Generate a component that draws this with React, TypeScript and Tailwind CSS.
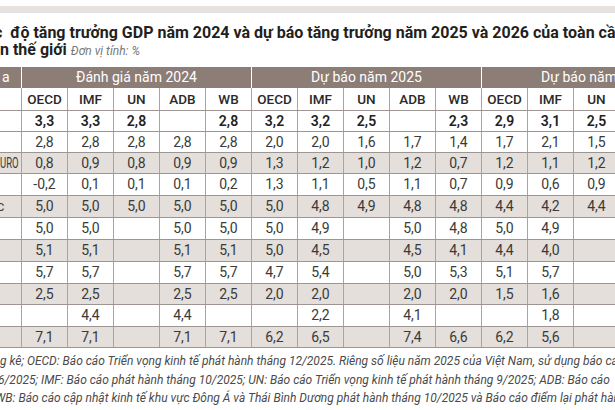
const groups = ['Đánh giá năm 2024', 'Dự báo năm 2025', 'Dự báo năm 2026'];
const orgs = ['OECD', 'IMF', 'UN', 'ADB', 'WB'];

type Row = {
  label: string;
  labelCls?: string;
  bold?: boolean;
  shaded?: boolean;
  h: string;
  v: string[];
};

const rows: Row[] = [
  { label: '', bold: true, h: 'h-[21px]', v: ['3,3', '3,3', '2,8', '', '2,8', '3,2', '3,2', '2,5', '', '2,3', '2,9', '3,1', '2,5', '', ''] },
  { label: '', h: 'h-[21px]', v: ['2,8', '2,8', '2,8', '2,8', '2,8', '2,0', '2,0', '1,6', '1,7', '1,4', '1,7', '2,1', '1,5', '', ''] },
  { label: 'URO', labelCls: 'inline-block origin-left scale-x-[0.68] text-[14px]', shaded: true, h: 'h-[21px]', v: ['0,8', '0,9', '0,8', '0,9', '0,9', '1,3', '1,2', '1,0', '1,2', '0,7', '1,2', '1,1', '1,2', '', ''] },
  { label: '', h: 'h-[22px]', v: ['-0,2', '0,1', '0,1', '0,1', '0,2', '1,3', '1,1', '0,5', '1,1', '0,7', '0,9', '0,6', '0,9', '', ''] },
  { label: 'c', labelCls: '-ml-[3px]', shaded: true, h: 'h-[22px]', v: ['5,0', '5,0', '5,0', '5,0', '5,0', '5,0', '4,8', '4,9', '4,8', '4,8', '4,4', '4,2', '4,4', '', ''] },
  { label: '', h: 'h-[22px]', v: ['5,0', '5,0', '', '5,0', '5,0', '5,0', '4,9', '', '5,0', '4,8', '5,0', '4,9', '', '', ''] },
  { label: '', shaded: true, h: 'h-[22px]', v: ['5,1', '5,1', '', '5,1', '5,1', '5,0', '4,5', '', '4,5', '4,1', '4,4', '4,0', '', '', ''] },
  { label: '', h: 'h-[22px]', v: ['5,7', '5,7', '', '5,7', '5,7', '4,7', '5,4', '', '5,0', '5,3', '5,1', '5,7', '', '', ''] },
  { label: '', shaded: true, h: 'h-[21px]', v: ['2,5', '2,5', '', '2,5', '2,5', '2,0', '2,0', '', '2,0', '2,0', '1,5', '1,6', '', '', ''] },
  { label: '', h: 'h-[22px]', v: ['', '4,4', '', '4,4', '', '', '2,2', '', '4,1', '', '', '1,8', '', '', ''] },
  { label: '', shaded: true, h: 'h-[21px]', v: ['7,1', '7,1', '', '7,1', '7,1', '6,2', '6,5', '', '7,4', '6,6', '6,2', '5,6', '', '', ''] },
];

export default function App() {
  return (
    <div className="h-[410px] w-[615px] overflow-hidden bg-white font-['Roboto',sans-serif] text-[#333]">
      {/* top rule */}
      <div className="mt-[6px] h-[7px] bg-[#e6e2df]" />

      {/* title */}
      <div className="mt-[11px] whitespace-nowrap">
        <div className="text-[16px] leading-[17px] font-bold text-[#231f20]">
          <span className="-ml-[6px] mr-[4px] inline-block">c</span> độ tăng trưởng GDP năm 2024 và dự báo tăng trưởng năm 2025 và 2026 của toàn cầu và
        </div>
        <div className="text-[16px] leading-[17px] font-bold text-[#231f20]">
          n thế giới <span className="text-[12px] font-normal italic text-[#777]">Đơn vị tính: %</span>
        </div>
      </div>

      {/* table */}
      <div className="mt-[7px] w-[711px]">
        <div className="flex h-[21px] bg-[#8c7d77] text-[14px] leading-[21px] text-white">
          <div className="w-[21px] shrink-0 pl-[2px]">a</div>
          {groups.map(g => (
            <div key={g} className="w-[230px] shrink-0 border-l border-white text-center">
              {g}
            </div>
          ))}
        </div>

        <div className="flex h-[23px] border-b border-[#9c9592] bg-white text-[13.5px] leading-[22px] font-medium text-[#2a2a2a]">
          <div className="w-[21px] shrink-0" />
          {groups.map(g =>
            orgs.map(o => (
              <div key={g + o} className="w-[46px] shrink-0 border-l border-[#aaa4a1] text-center">
                {o}
              </div>
            ))
          )}
        </div>

        {rows.map((r, i) => (
          <div
            key={i}
            className={`flex border-b border-[#9c9592] text-[14px] leading-[20px] ${r.h} ${r.shaded ? 'bg-[#e4dfdb]' : 'bg-white'} ${r.bold ? 'font-semibold text-[#222]' : 'text-[#3a3a3a]'}`}
          >
            <div className="w-[21px] shrink-0 overflow-hidden whitespace-nowrap">
              <div className={r.labelCls}>{r.label}</div>
            </div>
            {r.v.map((v, j) => (
              <div key={j} className="w-[46px] shrink-0 border-l border-[#aaa4a1] text-center">
                {v}
              </div>
            ))}
          </div>
        ))}
      </div>

      {/* source note */}
      <div className="mt-[4px] whitespace-nowrap text-[12px] leading-[18.5px] italic text-[#4a4a4a]">
        <div>g kê; OECD: Báo cáo Triển vọng kinh tế phát hành tháng 12/2025. Riêng số liệu năm 2025 của Việt Nam, sử dụng báo cáo</div>
        <div className="-ml-[2px]">6/2025; IMF: Báo cáo phát hành tháng 10/2025; UN: Báo cáo Triển vọng kinh tế phát hành tháng 9/2025; ADB: Báo cáo</div>
        <div className="-ml-[5px]">WB: Báo cáo cập nhật kinh tế khu vực Đông Á và Thái Bình Dương phát hành tháng 10/2025 và Báo cáo điểm lại phát hành</div>
      </div>
    </div>
  );
}
